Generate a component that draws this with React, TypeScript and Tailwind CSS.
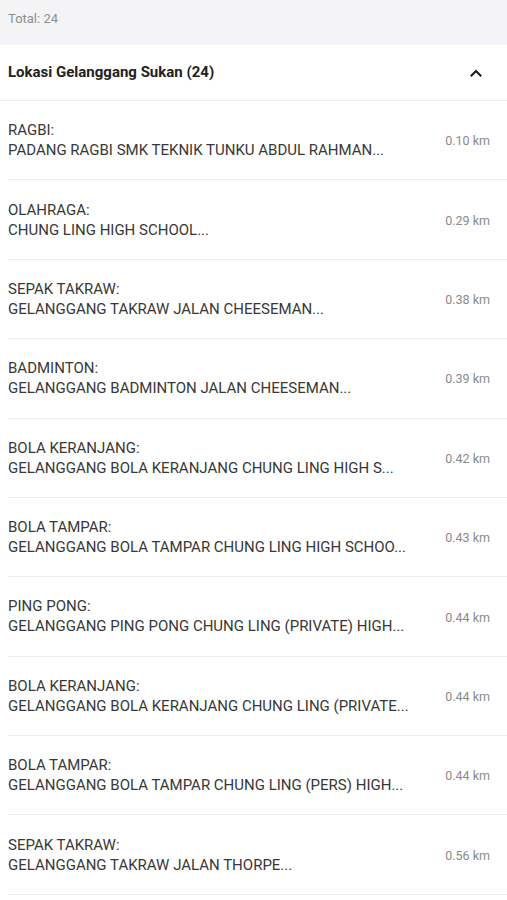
const venues = [
  { sport: "RAGBI", name: "PADANG RAGBI SMK TEKNIK TUNKU ABDUL RAHMAN...", km: "0.10 km" },
  { sport: "OLAHRAGA", name: "CHUNG LING HIGH SCHOOL...", km: "0.29 km" },
  { sport: "SEPAK TAKRAW", name: "GELANGGANG TAKRAW JALAN CHEESEMAN...", km: "0.38 km" },
  { sport: "BADMINTON", name: "GELANGGANG BADMINTON JALAN CHEESEMAN...", km: "0.39 km" },
  { sport: "BOLA KERANJANG", name: "GELANGGANG BOLA KERANJANG CHUNG LING HIGH S...", km: "0.42 km" },
  { sport: "BOLA TAMPAR", name: "GELANGGANG BOLA TAMPAR CHUNG LING HIGH SCHOO...", km: "0.43 km" },
  { sport: "PING PONG", name: "GELANGGANG PING PONG CHUNG LING (PRIVATE) HIGH...", km: "0.44 km" },
  { sport: "BOLA KERANJANG", name: "GELANGGANG BOLA KERANJANG CHUNG LING (PRIVATE...", km: "0.44 km" },
  { sport: "BOLA TAMPAR", name: "GELANGGANG BOLA TAMPAR CHUNG LING (PERS) HIGH...", km: "0.44 km" },
  { sport: "SEPAK TAKRAW", name: "GELANGGANG TAKRAW JALAN THORPE...", km: "0.56 km" },
];

export default function App() {
  return (
    <div className="min-h-screen bg-white font-['Roboto',sans-serif]">
      {/* Total bar */}
      <div className="h-[45px] bg-[#f4f4f6] px-2 pt-[9px] text-[13px] leading-[19px] text-[#8e8e8e]">
        Total: 24
      </div>

      {/* Section header */}
      <div className="flex h-[56px] items-center justify-between border-b border-[#ececec] pl-2 pr-[25px]">
        <span className="text-[15px] font-bold text-[#222]">
          Lokasi Gelanggang Sukan (24)
        </span>
        <svg width="12" height="8" viewBox="0 0 12 8" fill="none">
          <polyline
            points="1.5,6.5 6,2 10.5,6.5"
            stroke="#222"
            strokeWidth="2.2"
            strokeLinecap="square"
          />
        </svg>
      </div>

      {/* Rows */}
      <div className="pl-2">
        {venues.map((v, i) => (
          <div
            key={i}
            className="flex items-center justify-between border-b border-[#ececec] py-[19.2px] pr-[17px]"
          >
            <div className="whitespace-nowrap text-[15px] leading-[20px] text-[#383838]">
              <div>{v.sport}:</div>
              <div>{v.name}</div>
            </div>
            <span className="mt-[3px] text-[12.5px] text-[#8a8a8a]">{v.km}</span>
          </div>
        ))}
      </div>
    </div>
  );
}
